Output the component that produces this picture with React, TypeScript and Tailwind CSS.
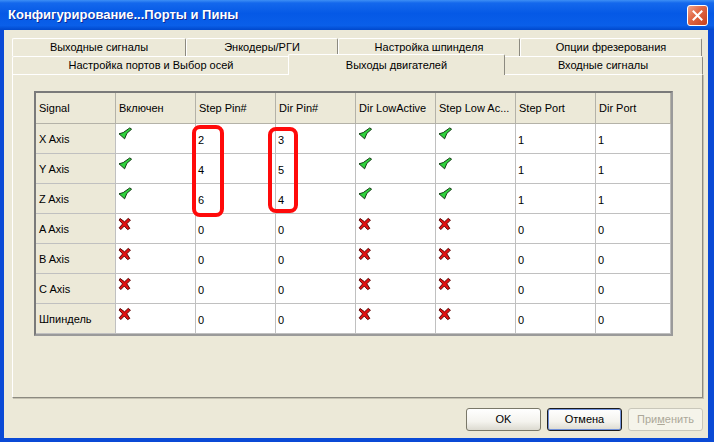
import React from "react";

type Row = [string, boolean, string, string, boolean, boolean, string, string];

const headers = [
  "Signal",
  "Включен",
  "Step Pin#",
  "Dir Pin#",
  "Dir LowActive",
  "Step Low Ac...",
  "Step Port",
  "Dir Port",
];

const rows: Row[] = [
  ["X Axis", true, "2", "3", true, true, "1", "1"],
  ["Y Axis", true, "4", "5", true, true, "1", "1"],
  ["Z Axis", true, "6", "4", true, true, "1", "1"],
  ["A Axis", false, "0", "0", false, false, "0", "0"],
  ["B Axis", false, "0", "0", false, false, "0", "0"],
  ["C Axis", false, "0", "0", false, false, "0", "0"],
  ["Шпиндель", false, "0", "0", false, false, "0", "0"],
];

function CheckIcon() {
  return (
    <svg width="15" height="13" viewBox="0 0 15 13">
      <path
        d="M1 6.8 L5.2 5.6 L11.8 0.9 L13.6 2.2 L8.9 6.3 L6.6 11.8 Z"
        fill="#2fd33c"
        stroke="#123d14"
        strokeWidth="1"
        strokeLinejoin="round"
      />
    </svg>
  );
}

function CrossIcon() {
  return (
    <svg width="14" height="14" viewBox="0 0 14 14">
      <path
        d="M2 1.5 L6.6 4.8 L10.2 1.4 L12.4 3.1 L8.8 6.8 L11.8 11.4 L9.6 12.6 L6.3 9 L2.8 12.6 L1.2 10.8 L4.6 6.9 L1.2 3.2 Z"
        fill="#e41212"
        stroke="#5c0606"
        strokeWidth="1"
        strokeLinejoin="round"
      />
    </svg>
  );
}

function Tab({
  label,
  width,
  selected,
}: {
  label: string;
  width: string;
  selected?: boolean;
}) {
  return (
    <div
      className={
        selected
          ? `${width} relative z-10 -mx-[2px] -mt-[2px] h-[21px] bg-[#ECE9D8] border-t border-l border-white border-r border-r-[#8c8a80] rounded-t-[2px] flex justify-center pt-[2px]`
          : `${width} h-[18px] bg-[#ECE9D8] border-t border-l border-white border-r border-r-[#8c8a80] rounded-t-[2px] flex items-center justify-center`
      }
    >
      {label}
    </div>
  );
}

function Button({
  children,
  variant,
}: {
  children: React.ReactNode;
  variant?: "default" | "disabled";
}) {
  if (variant === "disabled") {
    return (
      <div className="w-[75px] h-[23px] rounded-[3px] border border-[#c9c7ba] bg-[#f5f4ea] text-[#aca899] flex items-center justify-center">
        {children}
      </div>
    );
  }
  return (
    <div
      className={
        variant === "default"
          ? "w-[75px] h-[23px] rounded-[3px] border border-[#1c1c1c] bg-[linear-gradient(180deg,#ffffff_0%,#f4f3ee_60%,#dcdad0_100%)] shadow-[inset_0_0_0_1px_#6f8fd8] flex items-center justify-center"
          : "w-[75px] h-[23px] rounded-[3px] border border-[#7a7868] bg-[linear-gradient(180deg,#ffffff_0%,#f4f3ee_60%,#dcdad0_100%)] flex items-center justify-center"
      }
    >
      {children}
    </div>
  );
}

export default function App() {
  return (
    <div className="relative w-[714px] h-[442px] overflow-hidden bg-[#0a4ad6] font-['Liberation_Sans',Arial,sans-serif] text-[11px] text-black">
      {/* title bar */}
      <div className="h-[30px] flex items-center justify-between pl-[8px] pr-[6px] bg-[linear-gradient(180deg,#3d8ff5_0%,#1468ec_10%,#0559e6_45%,#0a5fe9_85%,#0048cc_100%)]">
        <span className="text-white font-bold text-[13px] [text-shadow:1px_1px_0_#0b2a9a]">
          Конфигурирование...Порты и Пины
        </span>
        <div className="w-[21px] h-[21px] rounded-[3px] border border-white bg-[linear-gradient(135deg,#eea48c_0%,#e26a47_40%,#c8401c_100%)] flex items-center justify-center">
          <svg width="11" height="11" viewBox="0 0 11 11">
            <path d="M1.5 1.5 L9.5 9.5 M9.5 1.5 L1.5 9.5" stroke="white" strokeWidth="2" strokeLinecap="square" />
          </svg>
        </div>
      </div>

      {/* dialog body */}
      <div className="ml-[4px] w-[704px] h-[408px] bg-[#ECE9D8] pl-[8px] pt-[8px]">
        <div className="w-[691px]">
          <div className="flex">
            <Tab label="Выходные сигналы" width="w-[174px]" />
            <Tab label="Энкодеры/РГИ" width="w-[152px]" />
            <Tab label="Настройка шпинделя" width="w-[182px]" />
            <Tab label="Опции фрезерования" width="w-[182px]" />
          </div>
          <div className="flex h-[18px]">
            <Tab label="Настройка портов и Выбор осей" width="w-[278px]" />
            <Tab label="Выходы двигателей" width="w-[217px]" selected />
            <Tab label="Входные сигналы" width="w-[200px]" />
          </div>

          {/* tab page */}
          <div className="h-[324px] border border-t-white border-l-white border-r-[#8c8a80] border-b-[#8c8a80] shadow-[1px_1px_0_#c5c2b2] pt-[16px] pl-[21px]">
            <div className="w-fit border-2 border-t-[#7a7a7a] border-l-[#7a7a7a] border-r-[#9a9a9a] border-b-[#9a9a9a] bg-white grid grid-cols-[repeat(7,80px)_75px]">
              {headers.map((h) => (
                <div
                  key={h}
                  className="h-[31px] bg-[#ECE9D8] border-r border-b border-[#b4b2a8] flex items-center pl-[3px] whitespace-nowrap overflow-hidden"
                >
                  {h}
                </div>
              ))}
              {rows.map((r) => (
                <React.Fragment key={r[0]}>
                  <div className="h-[30px] bg-[#ECE9D8] border-r border-b border-[#c0c0c0] flex items-center pl-[3px] pt-[2px]">
                    {r[0]}
                  </div>
                  {r.slice(1).map((v, i) =>
                    typeof v === "boolean" ? (
                      <div key={i} className="h-[30px] border-r border-b border-[#c0c0c0] pl-[2px] pt-[3px]">
                        {v ? <CheckIcon /> : <CrossIcon />}
                      </div>
                    ) : (
                      <div key={i} className="h-[30px] border-r border-b border-[#c0c0c0] flex items-center pl-[2px] pt-[3px]">
                        {v}
                      </div>
                    )
                  )}
                </React.Fragment>
              ))}
            </div>
          </div>

          {/* buttons */}
          <div className="flex justify-end gap-[6px] mt-[10px]">
            <Button>OK</Button>
            <Button variant="default">Отмена</Button>
            <Button variant="disabled">
              <span>
                При<span className="underline">м</span>енить
              </span>
            </Button>
          </div>
        </div>
      </div>

      {/* red annotation marks */}
      <div className="absolute left-[192px] top-[125px] w-[32px] h-[92px] border-[4px] border-[#ff0a0a] rounded-[8px]" />
      <div className="absolute left-[268px] top-[127px] w-[30px] h-[86px] border-[4px] border-[#ff0a0a] rounded-[8px]" />
    </div>
  );
}
